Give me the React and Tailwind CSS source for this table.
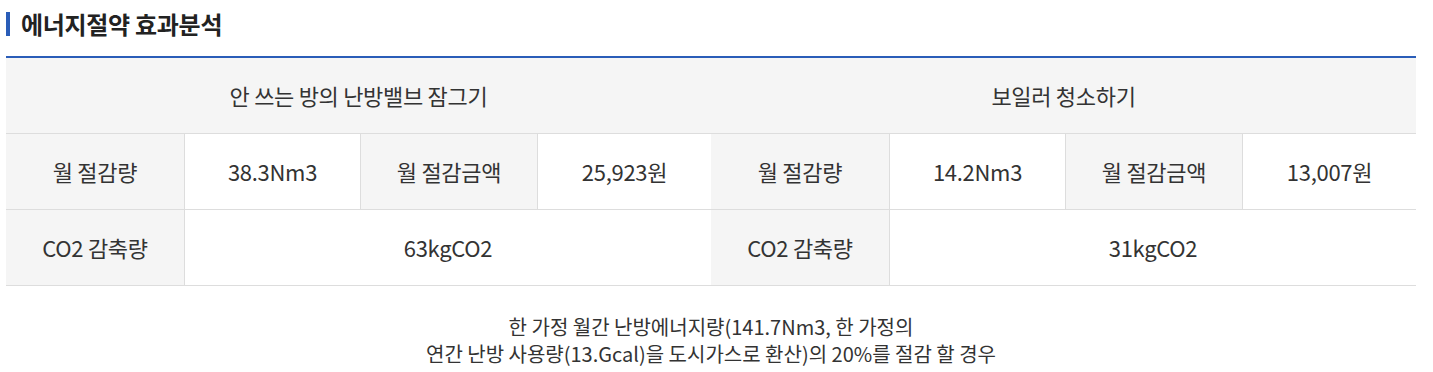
export default function App() {
  const font = { fontFamily: '"Noto Sans CJK KR", "Noto Sans", sans-serif' };
  const cell = "h-[76px] flex items-center justify-center text-[22px] text-[#333] border-b border-[#dddddd] tracking-[-0.3px]";
  return (
    <div className="w-[1433px] h-[372px] bg-white" style={font}>
      <div className="ml-[6px] w-[1410px]">
        <div className="h-[56px] flex items-start pt-[12px]">
          <div className="w-[4px] h-[24px] bg-[#2a5db8]" />
          <h2 className="ml-[11px] text-[24px] font-bold text-[#222] leading-[24px] tracking-[-0.3px]">에너지절약 효과분석</h2>
        </div>
        <div className="border-t-2 border-[#2a5db8]">
          <div className="grid grid-cols-2">
            <div className={cell + " bg-[#f5f5f5]"}>안 쓰는 방의 난방밸브 잠그기</div>
            <div className={cell + " bg-[#f5f5f5]"}>보일러 청소하기</div>
          </div>
          <div className="grid grid-cols-[178px_176px_177px_174px_178px_176px_177px_174px]">
            <div className={cell + " bg-[#f5f5f5]"}>월 절감량</div>
            <div className={cell + " border-l"}>38.3Nm3</div>
            <div className={cell + " bg-[#f5f5f5] border-l"}>월 절감금액</div>
            <div className={cell + " border-l"}>25,923원</div>
            <div className={cell + " bg-[#f5f5f5]"}>월 절감량</div>
            <div className={cell + " border-l"}>14.2Nm3</div>
            <div className={cell + " bg-[#f5f5f5] border-l"}>월 절감금액</div>
            <div className={cell + " border-l"}>13,007원</div>

            <div className={cell + " bg-[#f5f5f5]"}>CO2 감축량</div>
            <div className={cell + " border-l col-span-3"}>63kgCO2</div>
            <div className={cell + " bg-[#f5f5f5]"}>CO2 감축량</div>
            <div className={cell + " border-l col-span-3"}>31kgCO2</div>
          </div>
        </div>
        <div className="pt-[27px] text-center text-[20px] leading-[27px] text-[#333]">
          <p>한 가정 월간 난방에너지량(141.7Nm3, 한 가정의</p>
          <p>연간 난방 사용량(13.Gcal)을 도시가스로 환산)의 20%를 절감 할 경우</p>
        </div>
      </div>
    </div>
  );
}
